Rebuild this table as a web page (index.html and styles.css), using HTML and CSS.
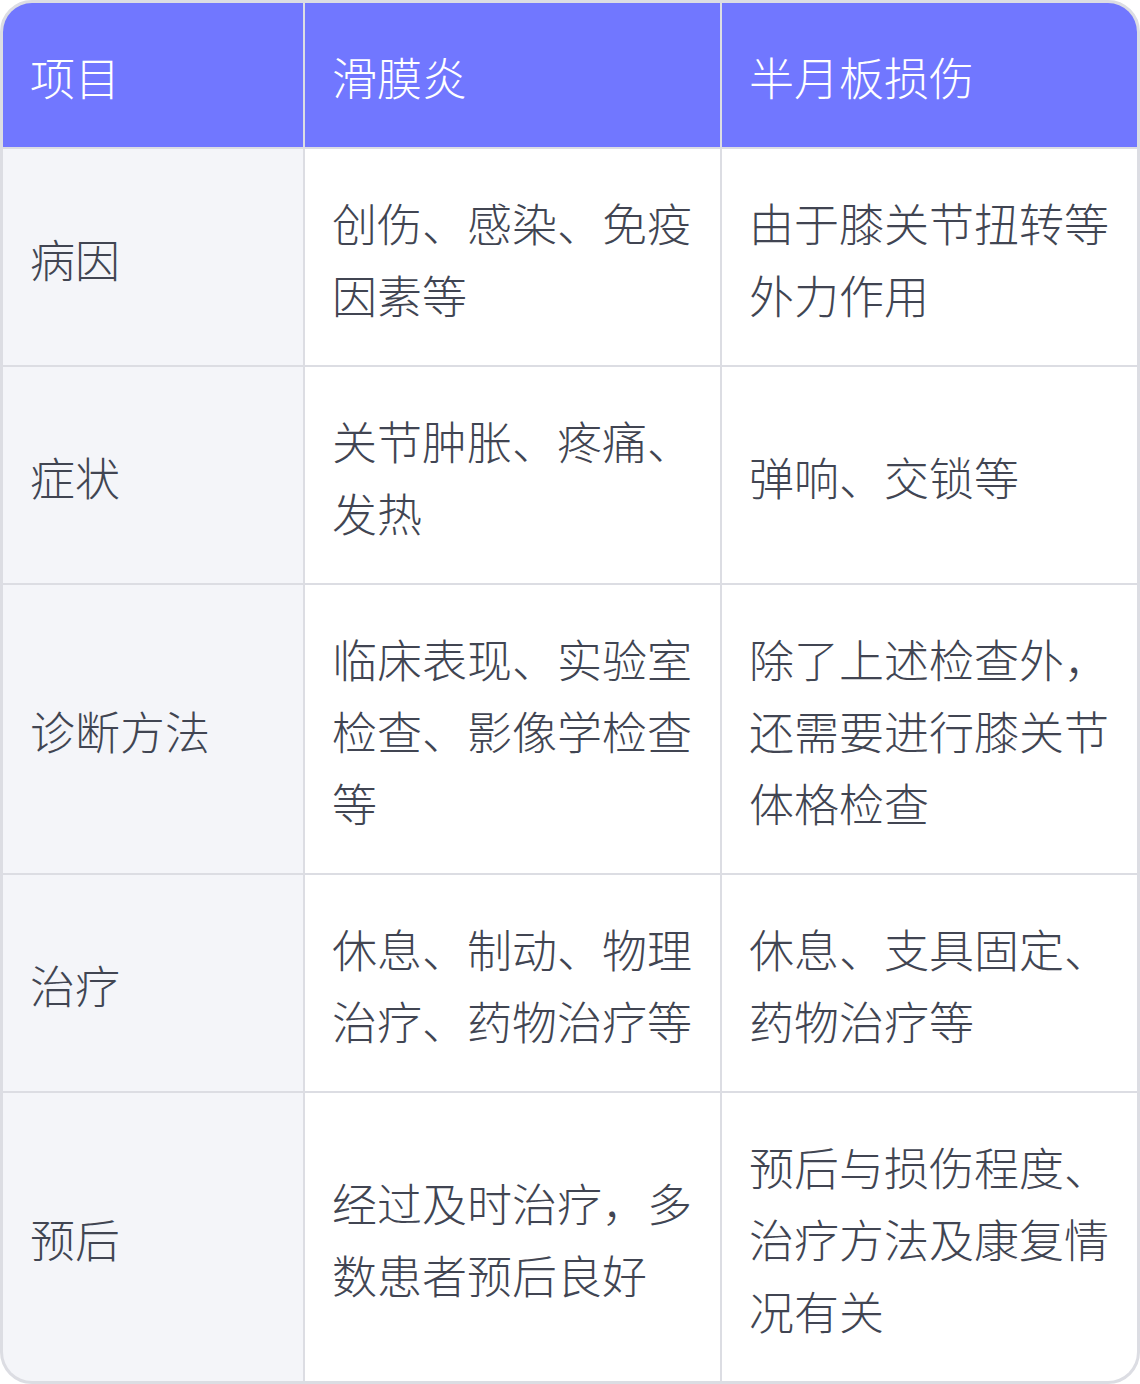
FILE: index.html
```html
<!DOCTYPE html>
<html lang="zh-CN">
<head>
<meta charset="utf-8">
<link rel="stylesheet" href="styles.css">
</head>
<body>
<div class="table">
  <div class="cell head">项目</div>
  <div class="cell head">滑膜炎</div>
  <div class="cell head">半月板损伤</div>

  <div class="cell first">病因</div>
  <div class="cell">创伤、感染、免疫因素等</div>
  <div class="cell">由于膝关节扭转等外力作用</div>

  <div class="cell first">症状</div>
  <div class="cell">关节肿胀、疼痛、发热</div>
  <div class="cell">弹响、交锁等</div>

  <div class="cell first">诊断方法</div>
  <div class="cell">临床表现、实验室检查、影像学检查等</div>
  <div class="cell">除了上述检查外，还需要进行膝关节体格检查</div>

  <div class="cell first">治疗</div>
  <div class="cell">休息、制动、物理治疗、药物治疗等</div>
  <div class="cell">休息、支具固定、药物治疗等</div>

  <div class="cell first">预后</div>
  <div class="cell">经过及时治疗，多数患者预后良好</div>
  <div class="cell">预后与损伤程度、治疗方法及康复情况有关</div>
</div>
</body>
</html>
```
FILE: styles.css
```css
html, body {
  margin: 0;
  padding: 0;
  background: #ffffff;
}
.table {
  width: 1140px;
  height: 1384px;
  box-sizing: border-box;
  border: 3px solid #dcdde3;
  border-radius: 32px;
  overflow: hidden;
  background: #dcdde3;
  display: grid;
  grid-template-columns: 300px 415px 415px;
  grid-template-rows: 144px 216px 216px 288px 216px 288px;
  gap: 2px;
  font-family: "Noto Sans CJK SC", "Noto Sans", sans-serif;
  font-size: 45px;
  font-weight: 300;
  line-height: 72px;
  color: #414552;
}
.cell {
  background: #ffffff;
  padding: 38px 26px 34px 27px;
  display: flex;
  align-items: center;
  box-sizing: border-box;
}
.cell.head {
  background: #7177ff;
  color: #ffffff;
}
.cell.first {
  background: #f4f5f9;
}
```
